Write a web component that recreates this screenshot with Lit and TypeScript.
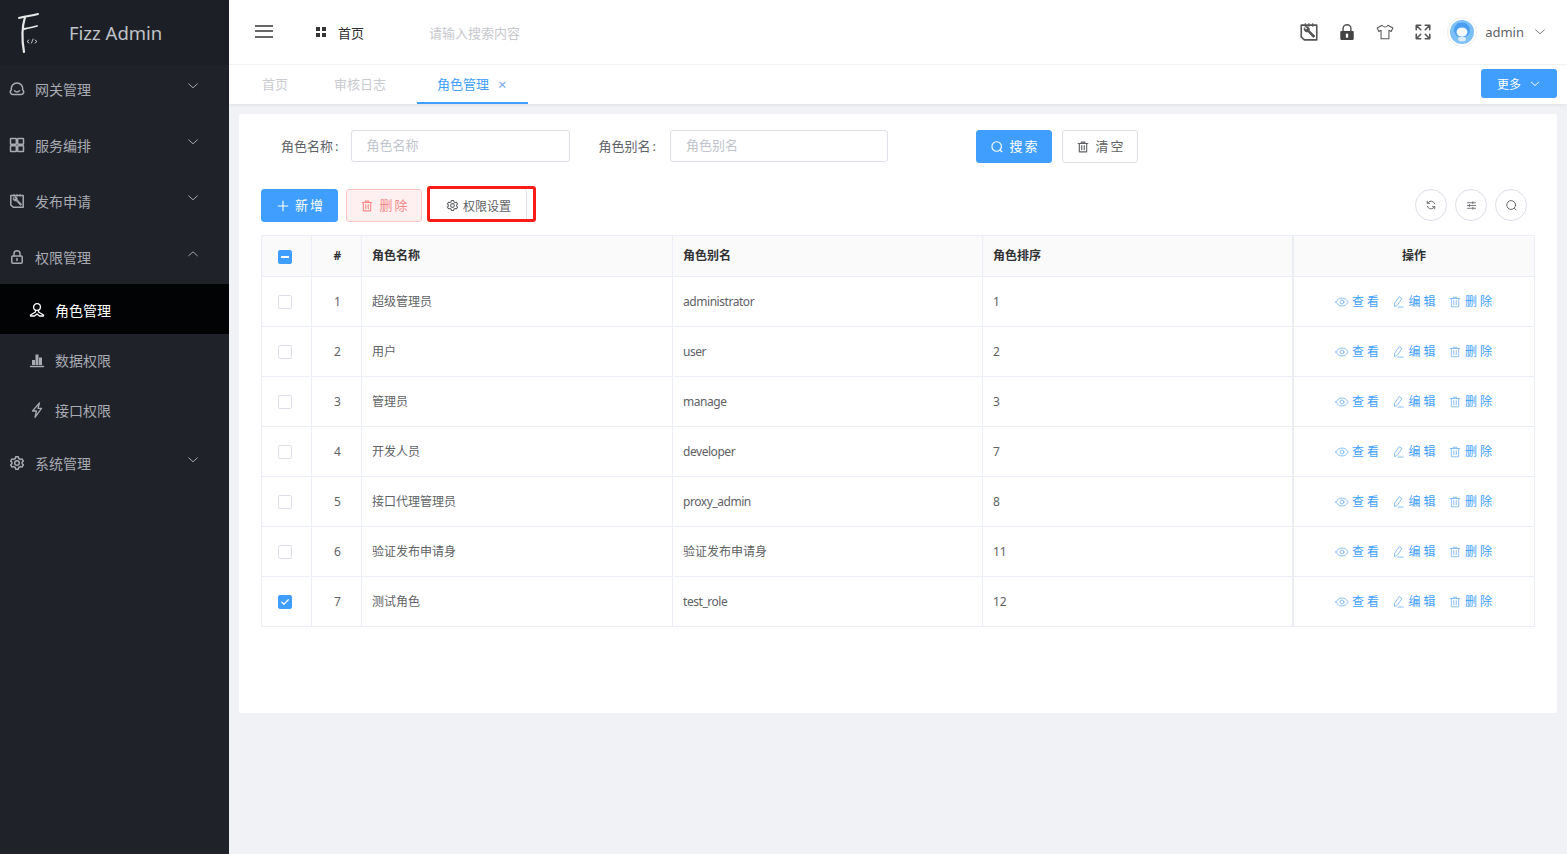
import { LitElement, html, css, svg } from "lit";
import { customElement } from "lit/decorators.js";

const ic = (body: unknown, size = 16, sw = 1.3) => html`<svg class="ic" width=${size} height=${size} viewBox="0 0 16 16" fill="none" stroke="currentColor" stroke-width=${sw} stroke-linecap="round" stroke-linejoin="round">${body}</svg>`;

const chevDown = svg`<path d="M3 5.500 8 10l5-4.500"/>`;
const chevUp = svg`<path d="M3 10 8 5.500l5 4.500"/>`;
const trash = svg`<path d="M2.500 4h11M6 4V2.500h4V4M3.800 4v9.500h8.400V4M6.600 6.500v4.500M9.400 6.500v4.500"/>`;
const search = svg`<circle cx="7.600" cy="7.400" r="5.400"/><path d="m11.600 11.400 2 2"/>`;
const eye = svg`<path d="M1 8c1.800-3 4-4.500 7-4.500S13.200 5 15 8c-1.800 3-4 4.500-7 4.500S2.800 11 1 8Z"/><circle cx="8" cy="8" r="2.200"/>`;
const pen = svg`<path d="M9.800 2 12.500 4 7 12l-3 1.200L4 10ZM8 13.800h6"/>`;
const gear = svg`<path d="M6.700 1.800h2.600l.4 1.700 1.600.9 1.700-.5 1.300 2.200L13.100 7.300v1.400l1.200 1.200-1.300 2.200-1.700-.5-1.600.9-.4 1.700H6.700l-.4-1.700-1.600-.9-1.700.5-1.300-2.200 1.200-1.200V7.300L1.700 6.100 3 3.900l1.700.5 1.600-.9Z"/><circle cx="8" cy="8" r="2.300"/>`;
const lockO = svg`<rect x="2.800" y="7" width="10.400" height="7.200" rx="1"/><path d="M5 7V4.800a3 3 0 0 1 6 0V7M8 9.500v2"/>`;
const wrench = svg`<path d="M1.800 2.500h12.400v11.800H4.300L1.800 12Z"/><path d="M4.200 4.800a2.300 2.300 0 0 0 3 3l4.300 4.700 1.300-1.300-4.600-4.400a2.300 2.300 0 0 0-3-3l1.500 1.500-1 1Z" fill="currentColor" stroke-width=".6"/><path d="M5 1.300v2M8 1.300v2M11 1.300v2" stroke-width=".9"/>`;

const logo = html`<svg width="30" height="44" viewBox="0 0 30 44" fill="none" stroke="#e8e8e8" stroke-linecap="round">
  <path d="M4 7C10 5 16 5 23 3" stroke-width="2"/>
  <path d="M10 6C7 16 7 30 9 41" stroke-width="2.200"/>
  <path d="M9 18C14 17 19 16 22 15" stroke-width="1.800"/>
  <path d="M14 29l-2 1.500 2 1.500M16.500 32l1.500-4M20 29l2 1.500-2 1.500" stroke-width=".8"/>
</svg>`;

const avatar = html`<svg class="ic" width="30" height="30" viewBox="0 0 30 30">
  <circle cx="15" cy="15" r="14.500" fill="#fff" stroke="#eceef3"/>
  <circle cx="15" cy="15" r="12" fill="#7cc0f7"/>
  <ellipse cx="15" cy="13" rx="8" ry="7.500" fill="#4a9ff0"/>
  <path d="M11 6l2 2M19 6l-2 2" stroke="#4a9ff0" stroke-width="1.500"/>
  <ellipse cx="15" cy="15" rx="5.500" ry="4.500" fill="#f4f8fd"/>
  <ellipse cx="15" cy="22" rx="4" ry="2.500" fill="#dcebfa"/>
</svg>`;

interface Role { n: string; a: string; s: string; checked?: boolean }
const rows: Role[] = [
  { n: "超级管理员", a: "administrator", s: "1" },
  { n: "用户", a: "user", s: "2" },
  { n: "管理员", a: "manage", s: "3" },
  { n: "开发人员", a: "developer", s: "7" },
  { n: "接口代理管理员", a: "proxy_admin", s: "8" },
  { n: "验证发布申请身", a: "验证发布申请身", s: "11" },
  { n: "测试角色", a: "test_role", s: "12", checked: true },
];

@customElement("app-root")
export class AppRoot extends LitElement {
  static styles = css`
    :host { display: flex; width: 100%; height: 854px; overflow: hidden; background: #f0f2f5;
      font-family: "Noto Sans", "Noto Sans CJK SC", sans-serif; font-size: 13px; color: #606266; }
    * { box-sizing: border-box; }
    .ic { display: block; flex: none; }
    .side { width: 229px; flex: none; background: #20222a; color: #a8abb2; }
    .brand { height: 65px; background: #1d1f26; display: flex; align-items: center; padding-left: 15px; gap: 24px; margin-bottom: -4px; position: relative; }
    .brand span { font-size: 18.500px; color: #bfc3c9; }
    .menu { height: 56px; display: flex; align-items: center; padding-left: 9px; gap: 10px; font-size: 14px; }
    .menu .ic:last-child { margin-left: auto; margin-right: 29px; margin-top: -7px; }
    .menu > .ic:first-child { stroke-width: 1.500; }
    .sub { height: 50px; display: flex; align-items: center; padding-left: 29px; gap: 10px; font-size: 14px; padding-top: 2px; }
    .sub.on { background: #020305; color: #fff; margin-top: -1px; }
    .gap { height: 1px; }
    .main { flex: 1; min-width: 0; display: flex; flex-direction: column; }
    .top { height: 65px; flex: none; background: #fff; display: flex; align-items: center; border-bottom: 1px solid #f2f3f5; padding-right: 20px; }
    .burger { margin-left: 26px; width: 18px; height: 13px; border-top: 2px solid #666; border-bottom: 2px solid #666; margin-top: -2px; }
    .burger::after { content: ""; display: block; height: 1.500px; background: #666; margin-top: 3.500px; }
    .crumb { display: flex; align-items: center; margin-left: 43px; color: #303133; gap: 12px; }
    .dots { display: grid; grid-template-columns: 4px 4px; gap: 2px; }
    .dots i { width: 4px; height: 4px; background: #333; }
    .ph { margin-left: 65px; color: #c6c8cc; }
    .tools { margin-left: auto; display: flex; align-items: center; color: #555; }
    .tools .ic + .ic { margin-left: 19px; }
    .tools .ic + .ic.av { margin-left: 15px; }
    .tools .ic.sh { margin-left: 20px; margin-right: 1px; }
    .user { margin-left: 8px; color: #606266; font-size: 13px; }
    .tools .chev { margin-left: 9px; color: #777; }
    .tabs { height: 39px; flex: none; background: #fff; display: flex; align-items: stretch; box-shadow: 0 1px 3px rgba(0,0,0,.08); }
    .tab { display: flex; align-items: center; padding: 0 20px 2px; color: #c9cbcf; }
    .tab.first { padding: 0 26px 2px 33px; }
    .tab.on { color: #409eff; border-bottom: 2px solid #409eff; gap: 9px; margin-left: 11px; padding: 0 20px; width: 111px; }
    .x { font-size: 15px; line-height: 1; color: #7aa8e8; margin-top: 2px; }
    .more { margin-left: auto; margin-right: 10px; margin-top: 4px; width: 76px; height: 29px; background: #409eff; color: #fff; border-radius: 3px; display: flex; align-items: center; justify-content: center; gap: 8px; font-size: 12px; }
    .content { padding: 10px 10px 0; }
    .card { background: #fff; height: 599px; padding: 16px 22px; border-radius: 2px; }
    .form { display: flex; align-items: flex-start; height: 33px; padding-left: 20px; }
    .lab { color: #606266; margin-right: 11px; line-height: 32px; }
    .lab i { font-style: normal; margin-left: 2px; margin-right: 1px; }
    .inp { height: 32px; border: 1px solid #dcdfe6; border-radius: 3px; color: #c0c4cc; display: flex; align-items: center; padding: 0 0 3px 15px; }
    .i1 { width: 219px; margin-right: 29px; }
    .i2 { width: 218px; margin-left: 2px; margin-right: 88px; }
    .btn { height: 33px; border-radius: 3px; display: flex; align-items: center; justify-content: center; gap: 5px; padding: 0 0 2px 2px; font-size: 13px; letter-spacing: 2px; border: 1px solid #dcdfe6; background: #fff; color: #606266; }
    .btn.p { background: #409eff; border-color: #409eff; color: #fff; }
    .btn.d { background: #fef0f0; border-color: #fbc4c4; color: #f78989; }
    .btn > .ic { margin-top: 2px; }
    .w76 { width: 76px; }
    .w77 { width: 77px; }
    .ml10 { margin-left: 10px; }
    .bar { display: flex; align-items: center; margin-top: 26px; height: 33px; position: relative; }
    .bar .b2 { margin-left: 8px; }
    .bar .b3 { margin-left: 8px; width: 97px; letter-spacing: 0; border-width: 0 1px 0 0; gap: 4px; font-size: 12px; padding: 0 0 0 1px; }
    .bar .b3 > .ic { margin-top: 0; }
    .mark { position: absolute; left: 166px; top: -3px; width: 109px; height: 36px; border: 3px solid #f81d16; border-radius: 3px; pointer-events: none; }
    .circles { margin-left: auto; display: flex; gap: 8px; margin-right: 8px; margin-top: -1px; }
    .circle { width: 32px; height: 32px; border-radius: 50%; border: 1px solid #dcdfe6; display: flex; align-items: center; justify-content: center; color: #606266; }
    .table { margin-top: 13px; border: 1px solid #ebeef5; border-width: 1px 1px 0 1px; font-size: 12px; display: grid; grid-template-columns: 50px 50px 311px 310px 311px 1fr; width: 1274px; }
    .c { border-right: 1px solid #ebeef5; border-bottom: 1px solid #ebeef5; display: flex; align-items: center; padding-left: 10px; height: 50px; color: #606266; }
    .c.cjk { padding-bottom: 2px; }
    .c.h { height: 41px; background: #fafafa; color: #303133; font-weight: 700; padding-bottom: 2px; }
    .c.ctr { justify-content: center; padding-left: 0; }
    .c.num { padding-left: 2px; }
    .c.act { border-left: 2px solid #ebeef5; margin-left: -2px; border-right: 0; gap: 9.500px; padding-left: 2px; }
    .c.h.act { padding-left: 0; }
    .lat { letter-spacing: -.45px; }
    .lnk { display: flex; align-items: center; gap: 3px; letter-spacing: 3px; color: #409eff; padding-bottom: 2px; }
    .lnk .ic { color: #7ab6f5; margin-top: 2px; }
    .cb { width: 14px; height: 14px; border: 1px solid #dcdfe6; border-radius: 2px; background: #fff; margin-right: 3px; display: flex; align-items: center; justify-content: center; }
    .cb.on { background: #409eff; border-color: #409eff; color: #fff; }
    .cb.hd { margin-top: 3px; }
    .cb b { width: 8px; height: 2px; background: #fff; }
  `;

  render() {
    const menu = (i: unknown, t: string, up = false) => html`<div class="menu">${ic(i)}<span>${t}</span>${ic(up ? chevUp : chevDown, 14, 1.1)}</div>`;
    return html`
      <aside class="side">
        <div class="brand">${logo}<span>Fizz Admin</span></div>
        ${menu(svg`<path d="M4 13.500a2.600 2.600 0 0 1-1.600-4.700A5.700 5.700 0 1 1 13.600 8.800 2.600 2.600 0 0 1 12 13.500Z"/><path d="M5.500 9.800c1.500 1.400 3.500 1.400 5 0"/>`, "网关管理")}
        ${menu(svg`<rect x="1.500" y="1.500" width="5.800" height="5.800" rx=".5"/><rect x="8.700" y="1.500" width="5.800" height="5.800" rx=".5"/><rect x="1.500" y="8.700" width="5.800" height="5.800" rx=".5"/><rect x="8.700" y="8.700" width="5.800" height="5.800" rx=".5"/>`, "服务编排")}
        ${menu(wrench, "发布申请")}
        ${menu(lockO, "权限管理", true)}
        <div class="sub on">${ic(svg`<circle cx="8" cy="5" r="3.400"/><path d="M6.500 8.500v1.500L1.500 13v1h4l2.500-2 2.500 2h4v-1l-5-3V8.500"/>`)}<span>角色管理</span></div>
        <div class="sub">${ic(svg`<path d="M1.500 14.500h13" stroke-width="1.400"/><path d="M3 13V8h3v5ZM6.500 13V2.500h3V13ZM10 13V5.500h3V13Z" fill="currentColor" stroke="none"/>`)}<span>数据权限</span></div>
        <div class="sub">${ic(svg`<path d="M10.500.8 3.500 9h4L6 15.300l6.500-9H9Z"/>`)}<span>接口权限</span></div>
        <div class="gap"></div>
        ${menu(gear, "系统管理")}
      </aside>
      <div class="main">
        <header class="top">
          <div class="burger"></div>
          <div class="crumb"><div class="dots"><i></i><i></i><i></i><i></i></div><span>首页</span></div>
          <div class="ph">请输入搜索内容</div>
          <div class="tools">
            ${ic(wrench, 20, 1.300)}
            ${html`<svg class="ic" width="18" height="18" viewBox="0 0 16 16"><path d="M4.500 7V5a3.500 3.500 0 0 1 7 0v2" fill="none" stroke="#555" stroke-width="1.300"/><rect x="2" y="7" width="12" height="8" rx="1" fill="#444"/><rect x="7" y="9.500" width="2" height="3.500" fill="#fff"/></svg>`}
            <span class="ic sh">${ic(svg`<path d="M5.500 2 1 4.500l1.500 3 2-1V14h7V6.500l2 1 1.500-3L10.500 2C10 4 6 4 5.500 2Z"/>`, 18, .9)}</span>
            ${ic(svg`<path d="M2 6V2h4M2 2l4 4M10 2h4v4M14 2l-4 4M2 10v4h4M2 14l4-4M14 10v4h-4M14 14l-4-4"/>`, 18, 1.400)}
            <span class="ic av">${avatar}</span>
            <span class="user">admin</span>
            <span class="chev">${ic(chevDown, 14, 1.100)}</span>
          </div>
        </header>
        <nav class="tabs">
          <div class="tab first">首页</div>
          <div class="tab">审核日志</div>
          <div class="tab on">角色管理<span class="x">×</span></div>
          <div class="more">更多 ${ic(chevDown, 12, 1.300)}</div>
        </nav>
        <div class="content">
          <section class="card">
            <div class="form">
              <span class="lab">角色名称<i>:</i></span><div class="inp i1">角色名称</div>
              <span class="lab">角色别名<i>:</i></span><div class="inp i2">角色别名</div>
              <div class="btn p w76">${ic(search, 14)}搜索</div>
              <div class="btn w76 ml10">${ic(trash, 14)}清空</div>
            </div>
            <div class="bar">
              <div class="btn p w77">${ic(svg`<path d="M8 2.500v11M2.500 8h11"/>`, 14)}新增</div>
              <div class="btn d w76 b2">${ic(trash, 14)}删除</div>
              <div class="btn b3">${ic(gear, 13)}权限设置</div>
              <div class="mark"></div>
              <div class="circles">
                <div class="circle">${ic(svg`<path d="M13 6.500A5.200 5.200 0 0 0 3.500 5.500M3 2.800v3h3M3 9.500a5.200 5.200 0 0 0 9.500 1M13 13.200v-3h-3"/>`, 12, 1.200)}</div>
                <div class="circle">${ic(svg`<path d="M2 4h12M2 8h12M2 12h12M10 2.500v3M5 6.500v3M10 10.500v3"/>`, 11, 1.200)}</div>
                <div class="circle">${ic(search, 13, 1.200)}</div>
              </div>
            </div>
            <div class="table">
              <div class="c h ctr"><span class="cb on hd"><b></b></span></div>
              <div class="c h ctr num">#</div>
              <div class="c h">角色名称</div>
              <div class="c h">角色别名</div>
              <div class="c h">角色排序</div>
              <div class="c h ctr act">操作</div>
              ${rows.map((r, i) => html`
                <div class="c ctr"><span class="cb ${r.checked ? "on" : ""}">${r.checked ? ic(svg`<path d="m3.500 8 3 3 6-6"/>`, 12, 1.500) : ""}</span></div>
                <div class="c ctr num">${i + 1}</div>
                <div class="c cjk">${r.n}</div>
                <div class="c ${/^[a-z_]+$/.test(r.a) ? "lat" : "cjk"}">${r.a}</div>
                <div class="c">${r.s}</div>
                <div class="c ctr act">
                  <span class="lnk">${ic(eye, 14, 1)}查看</span>
                  <span class="lnk">${ic(pen, 14, 1)}编辑</span>
                  <span class="lnk">${ic(trash, 14, 1)}删除</span>
                </div>`)}
            </div>
          </section>
        </div>
      </div>`;
  }
}
